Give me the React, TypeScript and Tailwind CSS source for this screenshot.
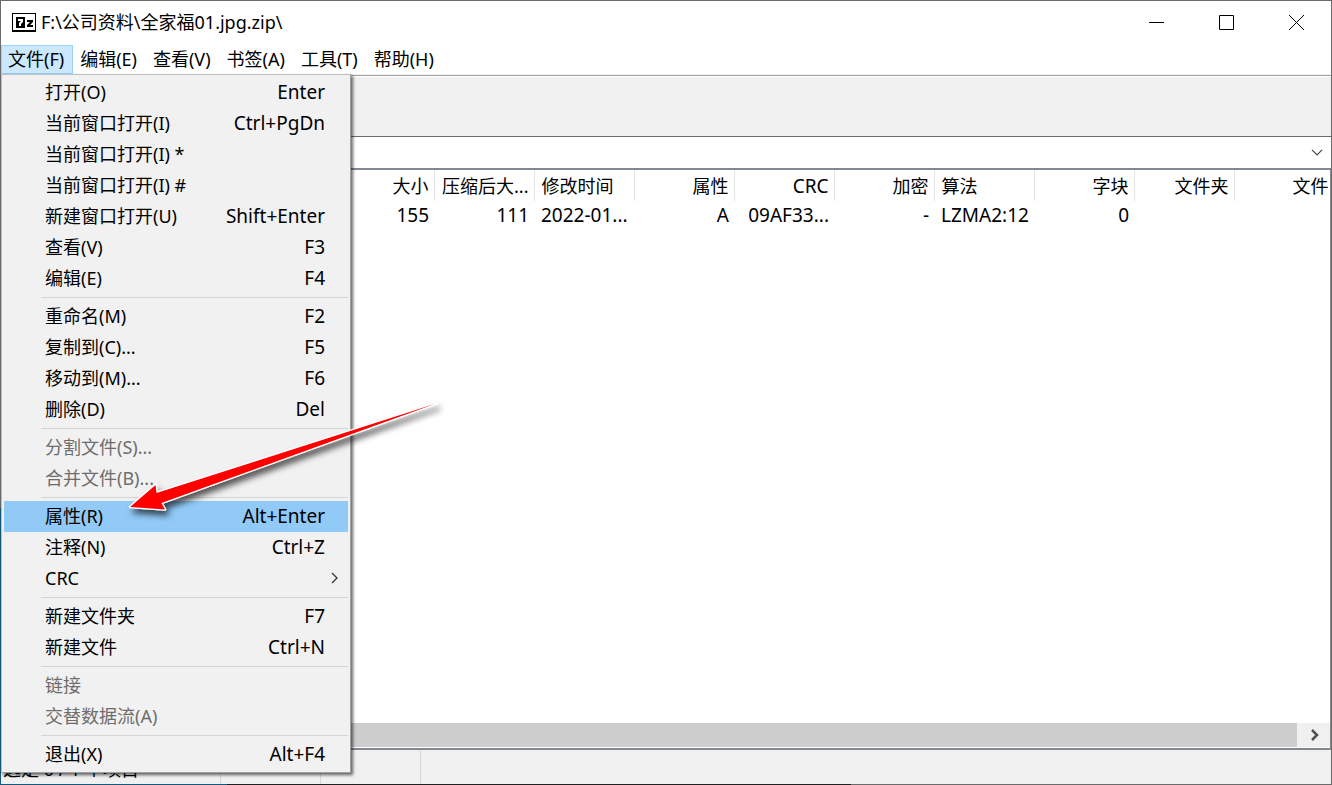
import React from "react";

type Item = { label: string; keys?: string; disabled?: boolean; active?: boolean; sub?: boolean };

const menus = ["文件(F)", "编辑(E)", "查看(V)", "书签(A)", "工具(T)", "帮助(H)"];

const groups: Item[][] = [
  [
    { label: "打开(O)", keys: "Enter" },
    { label: "当前窗口打开(I)", keys: "Ctrl+PgDn" },
    { label: "当前窗口打开(I) *" },
    { label: "当前窗口打开(I) #" },
    { label: "新建窗口打开(U)", keys: "Shift+Enter" },
    { label: "查看(V)", keys: "F3" },
    { label: "编辑(E)", keys: "F4" },
  ],
  [
    { label: "重命名(M)", keys: "F2" },
    { label: "复制到(C)...", keys: "F5" },
    { label: "移动到(M)...", keys: "F6" },
    { label: "删除(D)", keys: "Del" },
  ],
  [
    { label: "分割文件(S)...", disabled: true },
    { label: "合并文件(B)...", disabled: true },
  ],
  [
    { label: "属性(R)", keys: "Alt+Enter", active: true },
    { label: "注释(N)", keys: "Ctrl+Z" },
    { label: "CRC", sub: true },
  ],
  [
    { label: "新建文件夹", keys: "F7" },
    { label: "新建文件", keys: "Ctrl+N" },
  ],
  [
    { label: "链接", disabled: true },
    { label: "交替数据流(A)", disabled: true },
  ],
  [{ label: "退出(X)", keys: "Alt+F4" }],
];

const columns = [
  { title: "", value: "", left: true },
  { title: "大小", value: "155" },
  { title: "压缩后大...", value: "111" },
  { title: "修改时间", value: "2022-01...", left: true },
  { title: "属性", value: "A" },
  { title: "CRC", value: "09AF33..." },
  { title: "加密", value: "-" },
  { title: "算法", value: "LZMA2:12", left: true },
  { title: "字块", value: "0" },
  { title: "文件夹", value: "" },
  { title: "文件", value: "" },
];

function AppIcon() {
  return (
    <svg width="24" height="19" viewBox="0 0 24 19" aria-hidden="true">
      <rect width="24" height="19" fill="#000" />
      <rect x="1" y="1" width="22" height="16" fill="#fff" />
      <rect x="4" y="4" width="9" height="11" fill="#000" />
      <path d="M6 6h5v3l-2 2v2H7v-3l2-2H6z" fill="#fff" />
      <path d="M15 7h6v2l-3 3h3v2h-6v-2l3-3h-3z" fill="#000" />
    </svg>
  );
}

function TitleBar() {
  return (
    <header className="flex h-11 shrink-0 items-center pb-0.5">
      <div className="flex flex-1 items-center gap-[5px] pl-[11px]">
        <AppIcon />
        <h1 className="text-lg leading-6">F:\公司资料\全家福01.jpg.zip\</h1>
      </div>
      <button aria-label="最小化" className="flex h-full w-[70px] items-center justify-center">
        <svg width="15" height="15" viewBox="0 0 15 15"><path d="M0 7.5h15" stroke="#000" /></svg>
      </button>
      <button aria-label="最大化" className="flex h-full w-[70px] items-center justify-center">
        <svg width="15" height="15" viewBox="0 0 15 15"><path d="M.5.5h14v14H.5z" fill="none" stroke="#000" /></svg>
      </button>
      <button aria-label="关闭" className="flex h-full w-[70px] items-center justify-center">
        <svg width="15" height="15" viewBox="0 0 15 15"><path d="M0 0l15 15M15 0L0 15" stroke="#000" /></svg>
      </button>
    </header>
  );
}

function FileMenu() {
  return (
    <div
      role="menu"
      className="absolute top-full left-0 z-10 w-[350px] border border-[#c0c0c0] border-r-[#a0a0a0] border-b-[#a0a0a0] bg-[#f1f1f1] p-0.5 shadow-[2px_2px_3px_rgba(0,0,0,0.6)]"
    >
      {groups.map((group, g) => (
        <React.Fragment key={g}>
          {g > 0 && <div role="separator" className="my-[3px] ml-[37px] h-px bg-[#d4d4d4]" />}
          {group.map((item) => (
            <button
              key={item.label}
              role="menuitem"
              disabled={item.disabled}
              className={`flex h-[31px] w-full items-center justify-between pr-[23px] pb-0.5 pl-[41px] text-lg leading-6 ${
                item.active ? "bg-[#91c9f7]" : ""
              } ${item.disabled ? "text-[#6d6d6d]" : "text-black"}`}
            >
              <span>{item.label}</span>
              {item.keys && <span className="text-[19px]">{item.keys}</span>}
              {item.sub && (
                <svg width="7" height="12" viewBox="0 0 7 12" className="-mr-[13px]" aria-hidden="true">
                  <path d="M1 1l5 5-5 5" fill="none" stroke="#333" strokeWidth="1.3" />
                </svg>
              )}
            </button>
          ))}
        </React.Fragment>
      ))}
    </div>
  );
}

function MenuBar() {
  return (
    <nav className="relative flex h-[29px] shrink-0">
      {menus.map((m, i) => (
        <button
          key={m}
          className={`flex items-center border pr-2 pb-0.5 pl-1.5 text-lg leading-6 ${
            i === 0 ? "border-[#99d1ff] bg-[#cce8ff]" : "border-transparent"
          }`}
        >
          {m}
        </button>
      ))}
      <FileMenu />
    </nav>
  );
}

function FileTable() {
  return (
    <div className="flex-1 overflow-hidden">
      <table className="w-[1333px] table-fixed border-collapse text-lg leading-6">
        <colgroup>
          {columns.map((_, i) => (
            <col key={i} className={i === 0 ? "w-[333px]" : "w-[100px]"} />
          ))}
        </colgroup>
        <thead>
          <tr className="h-[31px]">
            {columns.map((c, i) => (
              <th
                key={i}
                className={`border-r border-[#e5e5e5] font-normal whitespace-nowrap ${c.left ? "pl-[7px] text-left" : "pr-[5px] text-right"} ${
                  c.title === "CRC" ? "text-[19px]" : ""
                }`}
              >
                {c.title}
              </th>
            ))}
          </tr>
        </thead>
        <tbody>
          <tr className="h-[27px] text-[19px]">
            {columns.map((c, i) => (
              <td key={i} className={`whitespace-nowrap ${c.left ? "pl-[7px] text-left" : "pr-[5px] text-right"}`}>
                {c.value}
              </td>
            ))}
          </tr>
        </tbody>
      </table>
    </div>
  );
}

function Arrow() {
  return (
    <svg
      width="330"
      height="130"
      viewBox="120 395 330 130"
      className="pointer-events-none absolute top-[395px] left-[120px] z-20"
      aria-hidden="true"
    >
      <defs>
        <filter id="drop" x="-10%" y="-20%" width="120%" height="150%">
          <feDropShadow dx="3" dy="5" stdDeviation="3" floodColor="#000" floodOpacity="0.65" />
        </filter>
      </defs>
      <path
        d="M130 507L155.500 485L156.500 493L436 403.500L161.500 503L165 509.500Z"
        fill="#f00"
        stroke="#fff"
        strokeWidth="2.600"
        strokeLinejoin="round"
        paintOrder="stroke"
        filter="url(#drop)"
      />
    </svg>
  );
}

export default function App() {
  return (
    <div className="relative flex h-screen w-full overflow-hidden bg-white font-['Noto_Sans','Noto_Sans_CJK_SC',sans-serif] text-black">
      <div className="flex w-px shrink-0 flex-col">
        <div className="flex-[508] bg-[#6b6b6b]" />
        <div className="flex-[277] bg-[#135a7c]" />
      </div>
      <div className="flex min-w-0 flex-1 flex-col border-t border-r border-[#6b6b6b]">
        <TitleBar />
        <MenuBar />
        <div className="h-[62px] shrink-0 border-t border-[#f0f0f0] bg-[#f0f0f0]">
          <div className="h-0.5 border-t border-[#a0a0a0] bg-white" />
        </div>
        <div className="relative flex h-[34px] shrink-0 items-center border-t border-b-2 border-t-[#6b6b6b] border-b-[#828790] bg-white">
          <select aria-label="路径" className="h-full w-full appearance-none bg-transparent text-lg">
            <option></option>
          </select>
          <svg width="12" height="7" viewBox="0 0 12 7" className="pointer-events-none absolute right-2" aria-hidden="true">
            <path d="M1 .8l5 5 5-5" fill="none" stroke="#444" strokeWidth="1.2" />
          </svg>
        </div>
        <main className="flex min-h-0 flex-1 flex-col border-r border-b-2 border-[#828790]">
          <FileTable />
          <div className="mb-px flex h-6 shrink-0">
            <div className="flex-1 bg-[#cdcdcd]" />
            <button aria-label="向右滚动" className="flex w-[33px] items-center justify-center bg-[#f0f0f0] pl-1">
              <svg width="9" height="12" viewBox="0 0 9 12">
                <path d="M1 1l5 5-5 5" fill="none" stroke="#505050" strokeWidth="2.500" />
              </svg>
            </button>
          </div>
        </main>
        <footer className="flex h-[34px] shrink-0 bg-[#f0f0f0] text-lg leading-6">
          <div className="w-[220px] border-r border-[#d7d7d7] pt-[7px] pl-0.5">选定 0 / 1 个项目</div>
          <div className="w-[100px] border-r border-[#d7d7d7]" />
          <div className="w-[100px] border-r border-[#d7d7d7]" />
        </footer>
        <div className="flex h-px shrink-0">
          <div className="w-[226px] bg-[#135a7c]" />
          <div className="w-[624px] bg-[#202020]" />
          <div className="flex-1 bg-[#6b6b6b]" />
        </div>
      </div>
      <Arrow />
    </div>
  );
}
